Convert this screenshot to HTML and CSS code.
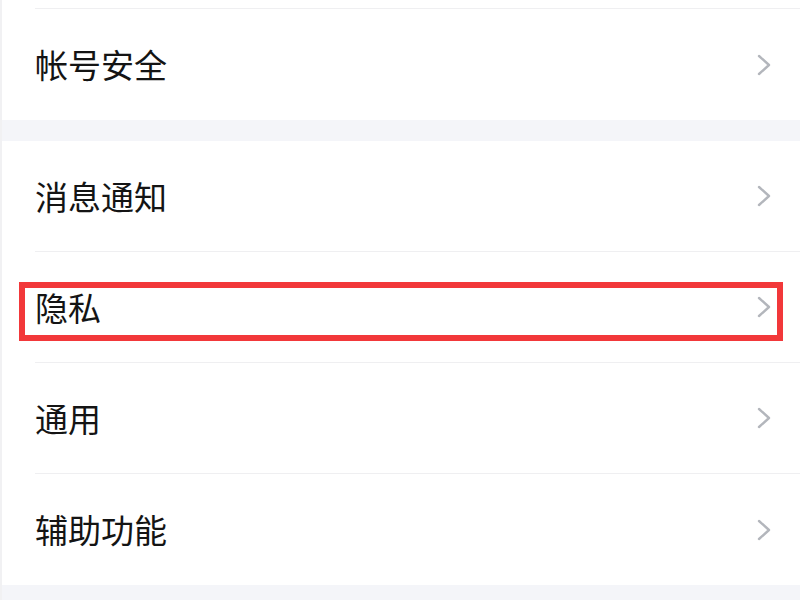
FILE: index.html
```html
<!DOCTYPE html>
<html lang="zh-CN">
<head>
<meta charset="utf-8">
<link rel="stylesheet" href="styles.css">
</head>
<body>
<div class="page">
  <section class="group">
    <div class="top-spacer"></div>
    <div class="row">
      <div class="row-body last">
        <span class="label">帐号安全</span>
        <svg class="chev" viewBox="0 0 14 22" width="14" height="22"><polyline points="2,2 12,11 2,20" /></svg>
      </div>
    </div>
  </section>
  <div class="band"></div>
  <section class="group">
    <div class="row">
      <div class="row-body">
        <span class="label">消息通知</span>
        <svg class="chev" viewBox="0 0 14 22" width="14" height="22"><polyline points="2,2 12,11 2,20" /></svg>
      </div>
    </div>
    <div class="row highlighted">
      <div class="row-body">
        <span class="label">隐私</span>
        <svg class="chev" viewBox="0 0 14 22" width="14" height="22"><polyline points="2,2 12,11 2,20" /></svg>
      </div>
      <div class="mark"></div>
    </div>
    <div class="row">
      <div class="row-body">
        <span class="label">通用</span>
        <svg class="chev" viewBox="0 0 14 22" width="14" height="22"><polyline points="2,2 12,11 2,20" /></svg>
      </div>
    </div>
    <div class="row">
      <div class="row-body last">
        <span class="label">辅助功能</span>
        <svg class="chev" viewBox="0 0 14 22" width="14" height="22"><polyline points="2,2 12,11 2,20" /></svg>
      </div>
    </div>
  </section>
  <div class="band"></div>
</div>
</body>
</html>
```
FILE: styles.css
```css
html, body {
  margin: 0;
  padding: 0;
  background: #ffffff;
}
body {
  width: 800px;
  height: 600px;
  overflow: hidden;
  font-family: "Noto Sans CJK SC", "Noto Sans", sans-serif;
}
.page {
  border-left: 2px solid #f1f1f3;
  background: #ffffff;
}
.group {
  background: #ffffff;
}
.top-spacer {
  height: 8px;
  margin-left: 33px;
  border-bottom: 1px solid #efeff1;
}
.row {
  position: relative;
  padding-left: 33px;
}
.row-body {
  height: 110px;
  display: flex;
  align-items: center;
  justify-content: space-between;
  padding-right: 29px;
  border-bottom: 1px solid #efeff1;
}
.row-body.last {
  border-bottom: none;
  height: 111px;
}
.label {
  font-size: 33px;
  line-height: 1;
  color: #141414;
  letter-spacing: 0;
}
.chev {
  display: block;
}
.chev polyline {
  fill: none;
  stroke: #b3b6bc;
  stroke-width: 2.4;
  stroke-linecap: round;
  stroke-linejoin: round;
}
.band {
  height: 21px;
  background: #f4f5f9;
}
.mark {
  position: absolute;
  left: 17px;
  top: 30px;
  width: 752px;
  height: 47px;
  border: 6px solid #f2383a;
}
```
